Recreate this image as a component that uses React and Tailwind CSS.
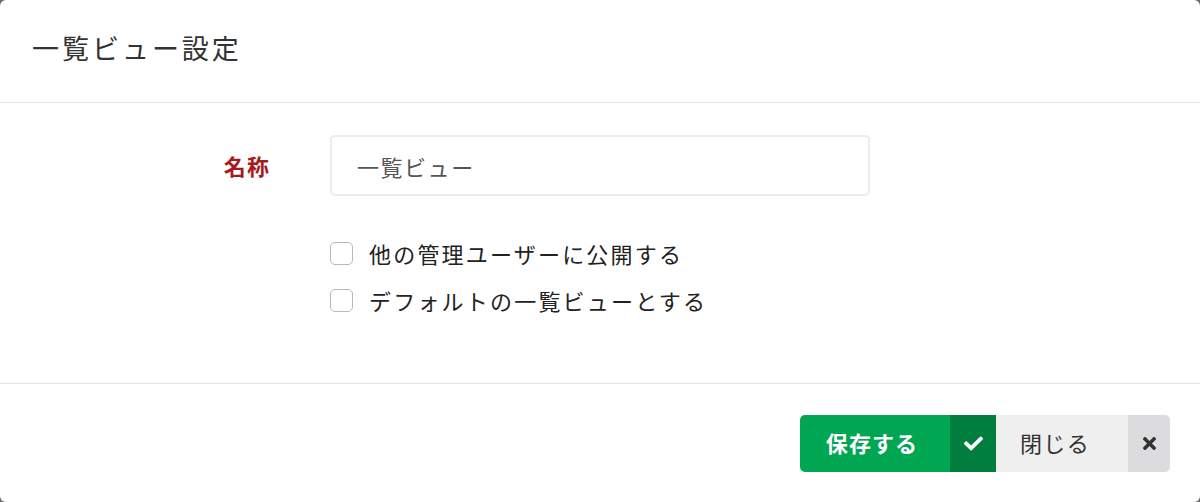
import React, { useState } from "react";

const font = { fontFamily: '"Noto Sans CJK JP", "Noto Sans", sans-serif' };

const Check = ({ label, checked, onChange }) => (
  <label className="flex items-center h-[47px] cursor-pointer select-none">
    <input type="checkbox" className="sr-only" checked={checked} onChange={onChange} />
    <span className="w-[23px] h-[23px] rounded-[5px] border-[1.5px] border-[#b8b8b8] bg-white shrink-0 flex items-center justify-center">
      {checked && (
        <svg viewBox="0 0 16 16" className="w-[15px] h-[15px] fill-[#333]">
          <path d="M6.2 11.6 2.6 8l-1.3 1.3 4.9 4.9L14.7 5.7l-1.3-1.3z" />
        </svg>
      )}
    </span>
    <span className="ml-[16px] text-[22px] tracking-[0.1em] text-[#222]">{label}</span>
  </label>
);

export default function App() {
  const [name, setName] = useState("一覧ビュー");
  const [share, setShare] = useState(false);
  const [def, setDef] = useState(false);

  return (
    <div className="w-[1200px] h-[502px] bg-[#6b6b6b]" style={font}>
      <div className="w-full h-full bg-white rounded-[6px] flex flex-col">
        {/* header */}
        <div className="h-[103px] border-b border-[#e3e3e3] flex items-center px-[32px] pb-[6px]">
          <h1 className="text-[27px] tracking-[0.11em] text-[#333] font-normal">一覧ビュー設定</h1>
        </div>

        {/* body */}
        <div className="flex-1 border-b border-[#e3e3e3] pt-[32px]">
          <div className="flex items-center">
            <div className="w-[270px] text-right text-[22px] font-bold text-[#a8191c] tracking-[0.05em]">
              名称
            </div>
            <input
              value={name}
              onChange={(e) => setName(e.target.value)}
              className="ml-[60px] w-[540px] h-[61px] rounded-[5px] border-2 border-[#ececec] px-[25px] text-[22px] tracking-[0.07em] text-[#555] outline-none"
              style={font}
            />
          </div>
          <div className="ml-[330px] mt-[34px] flex flex-col">
            <Check label="他の管理ユーザーに公開する" checked={share} onChange={() => setShare(!share)} />
            <Check label="デフォルトの一覧ビューとする" checked={def} onChange={() => setDef(!def)} />
          </div>
        </div>

        {/* footer */}
        <div className="h-[118px] flex items-start justify-end pt-[31px] pr-[30px]">
          <button className="flex h-[57px] rounded-l-[5px] overflow-hidden bg-[#00a652] text-white">
            <span className="w-[150px] flex items-center justify-center text-[22px] font-bold tracking-[0.05em] pb-[2px] pr-[6px]">
              保存する
            </span>
            <span className="w-[46px] flex items-center justify-center bg-[#007e3d]">
              <svg viewBox="0 0 512 512" className="w-[19px] h-[19px] fill-white">
                <path d="M173.9 439.4 7.5 273c-10-10-10-26.2 0-36.2l36.2-36.2c10-10 26.2-10 36.2 0L192 312.7 432.1 72.6c10-10 26.2-10 36.2 0l36.2 36.2c10 10 10 26.2 0 36.2L210.1 439.4c-10 10-26.2 10-36.2 0z" />
              </svg>
            </span>
          </button>
          <button className="flex h-[57px] rounded-r-[5px] overflow-hidden bg-[#efefef] text-[#333]">
            <span className="w-[132px] flex items-center justify-center text-[22px] tracking-[0.06em] pb-[2px] pr-[14px]">
              閉じる
            </span>
            <span className="w-[42px] flex items-center justify-center bg-[#dcdcde]">
              <svg viewBox="0 0 352 512" className="w-[15px] h-[19px] fill-[#333]">
                <path d="m242.7 256 100.1-100.1c12.3-12.3 12.3-32.2 0-44.5l-22.2-22.2c-12.3-12.3-32.2-12.3-44.5 0L176 189.3 75.9 89.2c-12.3-12.3-32.2-12.3-44.5 0L9.2 111.4c-12.3 12.3-12.3 32.2 0 44.5L109.3 256 9.2 356.1c-12.3 12.3-12.3 32.2 0 44.5l22.2 22.2c12.3 12.3 32.2 12.3 44.5 0L176 322.7l100.1 100.1c12.3 12.3 32.2 12.3 44.5 0l22.2-22.2c12.3-12.3 12.3-32.2 0-44.5z" />
              </svg>
            </span>
          </button>
        </div>
      </div>
    </div>
  );
}
